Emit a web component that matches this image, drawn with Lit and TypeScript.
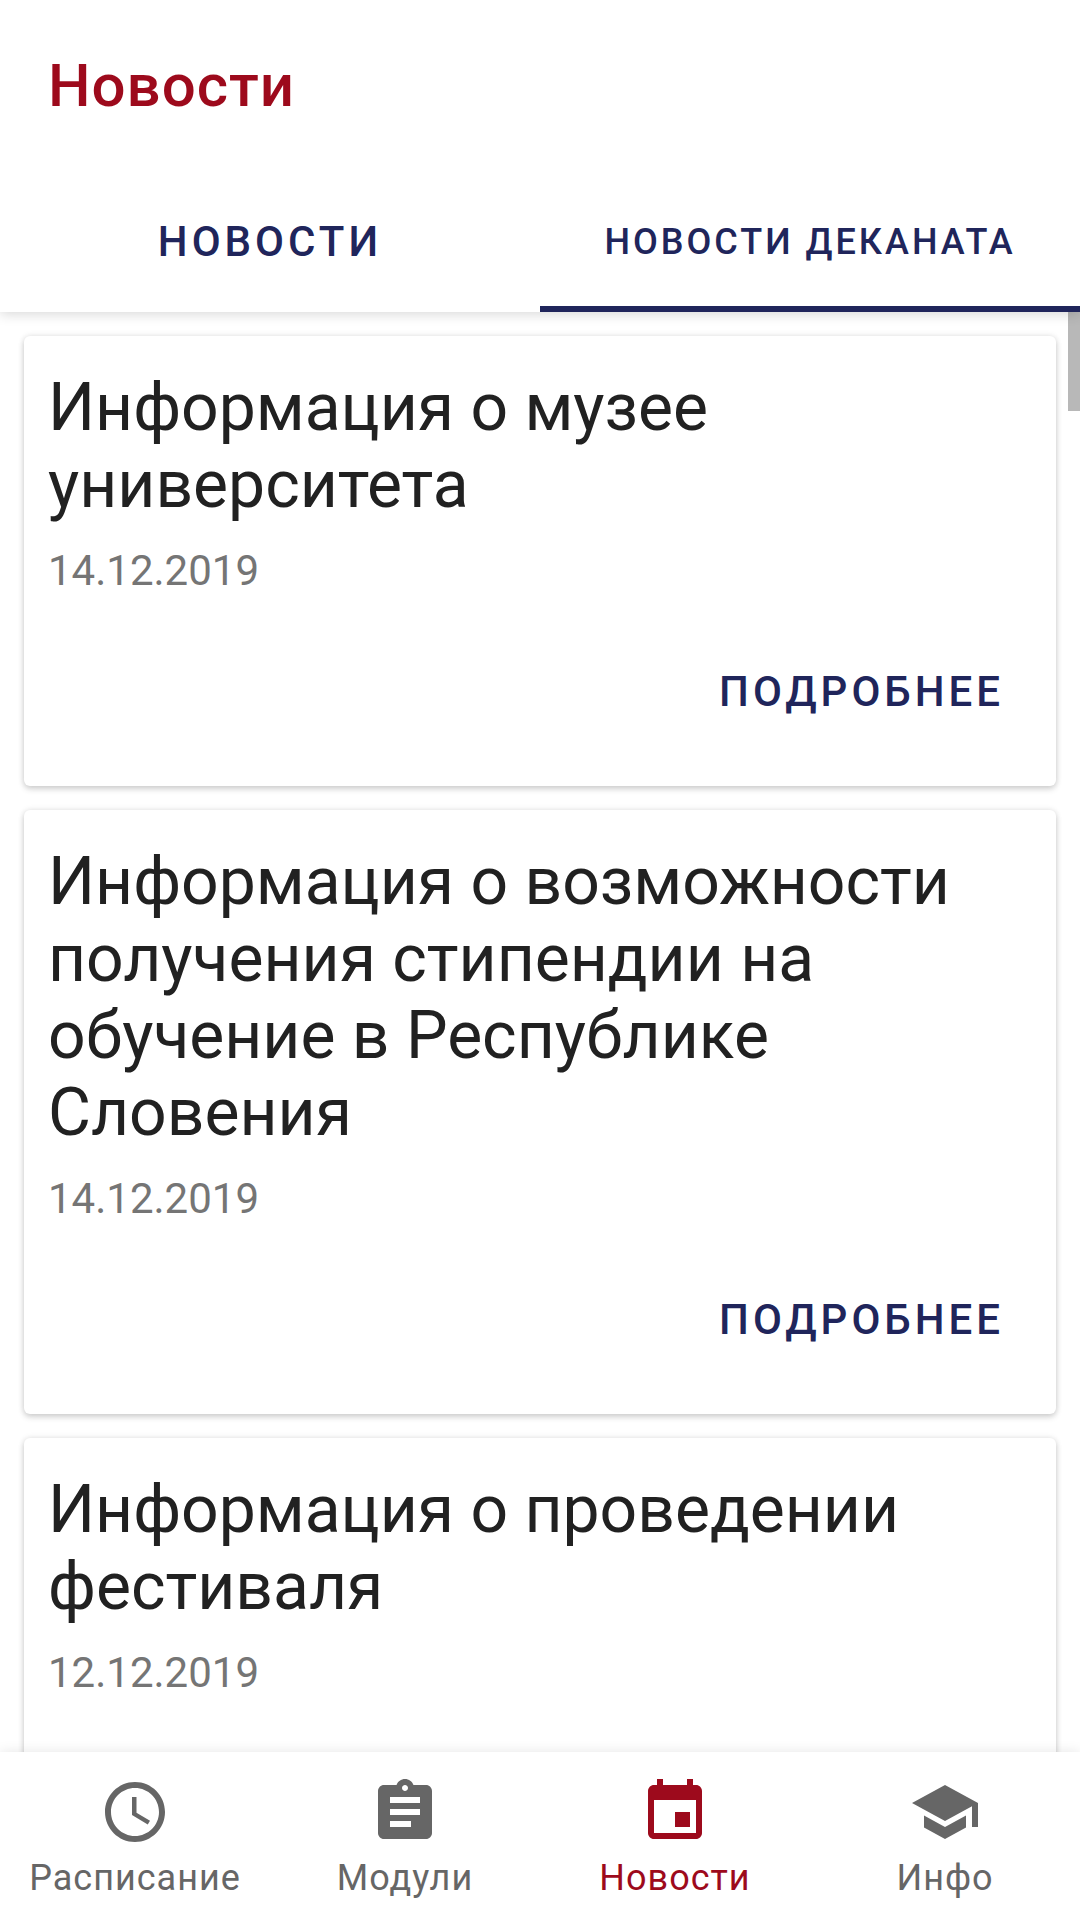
import { LitElement, html, svg, css } from "lit";
import { customElement, property, state } from "lit/decorators.js";
import { classMap } from "lit/directives/class-map.js";

interface NewsItem {
  title: string;
  date: string;
}

const NEWS: NewsItem[] = [
  { title: "Информация о музее университета", date: "14.12.2019" },
  {
    title:
      "Информация о возможности получения стипендии на обучение в Республике Словения",
    date: "14.12.2019",
  },
  { title: "Информация о проведении фестиваля", date: "12.12.2019" },
];

const SECTIONS = [
  {
    label: "Расписание",
    icon: svg`<path d="M11.99 2C6.47 2 2 6.48 2 12s4.47 10 9.99 10C17.52 22 22 17.52 22 12S17.52 2 11.99 2zM12 20c-4.42 0-8-3.58-8-8s3.58-8 8-8 8 3.58 8 8-3.58 8-8 8z"/><path d="M12.5 7H11v6l5.25 3.15.75-1.23-4.5-2.67z"/>`,
  },
  {
    label: "Модули",
    icon: svg`<path d="M19 3h-4.18C14.4 1.84 13.3 1 12 1c-1.3 0-2.4.84-2.82 2H5c-1.1 0-2 .9-2 2v14c0 1.1.9 2 2 2h14c1.1 0 2-.9 2-2V5c0-1.1-.9-2-2-2zm-7 0c.55 0 1 .45 1 1s-.45 1-1 1-1-.45-1-1 .45-1 1-1zm2 14H7v-2h7v2zm3-4H7v-2h10v2zm0-4H7V7h10v2z"/>`,
  },
  {
    label: "Новости",
    icon: svg`<path d="M17 12h-5v5h5v-5zM16 1v2H8V1H6v2H5c-1.11 0-1.99.9-1.99 2L3 19c0 1.1.89 2 2 2h14c1.1 0 2-.9 2-2V5c0-1.1-.9-2-2-2h-1V1h-2zm3 18H5V8h14v11z"/>`,
  },
  {
    label: "Инфо",
    icon: svg`<path d="M5 13.18v4L12 21l7-3.82v-4L12 17l-7-3.82zM12 3L1 9l11 6 9-4.91V17h2V9L12 3z"/>`,
  },
];

@customElement("news-card")
export class NewsCard extends LitElement {
  @property({ attribute: false }) item!: NewsItem;

  static styles = css`
    :host {
      display: block;
    }
    .card {
      display: flex;
      flex-direction: column;
      padding: 33px 24px 23px;
      border-radius: 6px;
      background: #fff;
      box-shadow: 0 3px 6px rgba(0, 0, 0, 0.16), 0 0 6px rgba(0, 0, 0, 0.1);
    }
    .title {
      margin: 0;
      font-size: 66px;
      line-height: 77px;
      font-weight: 400;
      color: #212121;
    }
    .date {
      margin: 24px 0;
      font-size: 42px;
      line-height: 48px;
      color: #757575;
    }
    .more {
      align-self: flex-end;
      height: 144px;
      padding: 0 28px;
      border: 0;
      background: none;
      font: inherit;
      font-size: 42px;
      font-weight: 500;
      letter-spacing: 4px;
      text-transform: uppercase;
      color: #20255b;
      cursor: pointer;
    }
  `;

  render() {
    return html`
      <article class="card">
        <h2 class="title">${this.item.title}</h2>
        <time class="date">${this.item.date}</time>
        <button class="more" type="button">Подробнее</button>
      </article>
    `;
  }
}

@customElement("app-root")
export class AppRoot extends LitElement {
  @state() private tab = 1;
  @state() private section = 2;

  static styles = css`
    :host {
      display: flex;
      flex-direction: column;
      height: 100vh;
      background: #fff;
      font-family: Roboto, "Noto Sans", sans-serif;
    }
    .header {
      position: relative;
      z-index: 1;
      background: #fff;
      box-shadow: 0 2px 12px rgba(0, 0, 0, 0.16);
    }
    .heading {
      margin: 0;
      padding: 4px 48px 0;
      font-size: 60px;
      line-height: 164px;
      font-weight: 500;
      letter-spacing: 1px;
      color: #9d0a1c;
    }
    .tabs {
      display: grid;
      grid-template-columns: 1fr 1fr;
    }
    .tab {
      height: 144px;
      padding: 9px 24px 0;
      border: 0;
      border-bottom: 6px solid transparent;
      background: none;
      font: inherit;
      font-size: 42px;
      font-weight: 500;
      letter-spacing: 4px;
      text-transform: uppercase;
      color: #20255b;
      cursor: pointer;
    }
    .tab.long {
      font-size: 36px;
      letter-spacing: 3px;
    }
    .tab.active {
      border-bottom-color: #20255b;
    }
    .content {
      position: relative;
      flex: 1;
      min-height: 0;
    }
    .list {
      display: flex;
      flex-direction: column;
      gap: 24px;
      box-sizing: border-box;
      height: 100%;
      padding: 24px;
      overflow-y: auto;
      scrollbar-width: none;
    }
    .list > * {
      flex: none;
    }
    .thumb {
      position: absolute;
      top: 0;
      right: 0;
      width: 12px;
      height: 99px;
      background: rgba(0, 0, 0, 0.28);
    }
    .nav {
      position: relative;
      z-index: 1;
      display: grid;
      grid-template-columns: repeat(4, 1fr);
      background: #fff;
      box-shadow: 0 0 12px rgba(0, 0, 0, 0.1);
    }
    .item {
      display: flex;
      flex-direction: column;
      align-items: center;
      gap: 8px;
      height: 168px;
      padding: 24px 0 0;
      border: 0;
      background: none;
      font: inherit;
      font-size: 36px;
      line-height: 44px;
      letter-spacing: 1px;
      color: #666;
      cursor: pointer;
    }
    .item.active {
      color: #9d0a1c;
    }
    .icon {
      flex: none;
      width: 72px;
      height: 72px;
      fill: currentColor;
    }
  `;

  render() {
    const tabs = ["Новости", "Новости деканата"];
    return html`
      <header class="header">
        <h1 class="heading">Новости</h1>
        <div class="tabs" role="tablist">
          ${tabs.map(
            (label, i) => html`<button
              type="button"
              role="tab"
              aria-selected=${this.tab === i ? "true" : "false"}
              class=${classMap({
                tab: true,
                long: label.length > 10,
                active: this.tab === i,
              })}
              @click=${() => (this.tab = i)}
            >
              ${label}
            </button>`
          )}
        </div>
      </header>
      <main class="content">
        <div class="list">
          ${NEWS.map((item) => html`<news-card .item=${item}></news-card>`)}
        </div>
        <div class="thumb"></div>
      </main>
      <nav class="nav">
        ${SECTIONS.map(
          (s, i) => html`<button
            type="button"
            class=${classMap({ item: true, active: this.section === i })}
            @click=${() => (this.section = i)}
          >
            <svg class="icon" viewBox="0 0 24 24" aria-hidden="true">
              ${s.icon}
            </svg>
            <span>${s.label}</span>
          </button>`
        )}
      </nav>
    `;
  }
}
